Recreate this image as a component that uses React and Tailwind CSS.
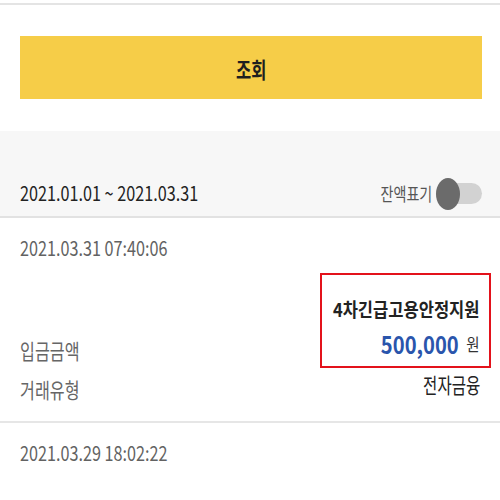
const font = { fontFamily: '"Noto Sans CJK KR", "Noto Sans", sans-serif' }

export default function App() {
  return (
    <div className="w-[500px] h-[500px] overflow-hidden bg-white" style={font}>
      {/* top edge */}
      <div className="h-[3px] bg-white" />
      <div className="h-[2px] bg-[#e4e4e4]" />

      {/* search button */}
      <div className="px-[20px] pt-[31px] pb-[32px]">
        <button className="w-[462px] h-[63px] bg-[#f6cd48] flex items-center justify-center text-[#1f1f1f]">
          <span className="inline-block text-[22px] font-bold leading-[26px] scale-x-[0.75]">조회</span>
        </button>
      </div>

      {/* period header */}
      <div className="bg-[#f7f7f7] h-[87px] flex items-end border-b-2 border-[#e2e2e2]">
        <div className="w-full flex items-center justify-between pl-[20px] pr-[18px] pb-[12px]">
          <span className="inline-block origin-left scale-x-[0.81] text-[20px] leading-[22px] text-[#222] whitespace-nowrap">
            2021.01.01 ~ 2021.03.31
          </span>
          <div className="flex items-center gap-[4px]">
            <span className="inline-block origin-right scale-x-[0.78] text-[18px] leading-[22px] text-[#555]">잔액표기</span>
            <div className="relative w-[46px] h-[21px] rounded-full bg-[#d2d2d2]">
              <div className="absolute left-0 top-[-5px] w-[24px] h-[32px] rounded-[50%] bg-[#6b6b6b]" />
            </div>
          </div>
        </div>
      </div>

      {/* transaction */}
      <div className="pl-[20px] pr-[9px] pt-[19px] pb-[21px] border-b-2 border-[#e6e6e6]">
        <div className="h-[22px]">
          <span className="inline-block origin-left scale-x-[0.81] text-[20px] leading-[22px] text-[#626262] whitespace-nowrap">
            2021.03.31 07:40:06
          </span>
        </div>
        <div className="flex justify-between items-end mt-[14px]">
          <span className="inline-block origin-left scale-x-[0.77] text-[21px] leading-[22px] text-[#666] mb-[7px]">입금금액</span>
          <div className="w-[171px] h-[95px] border-2 border-[#e3121b] flex flex-col items-end pt-[23px] pr-[9px]">
            <span className="inline-block origin-right scale-x-[0.87] text-[19px] font-bold leading-[22px] text-[#222] whitespace-nowrap">
              4차긴급고용안정지원
            </span>
            <div className="flex items-center justify-end mt-[11px] h-[26px]">
              <span className="inline-block origin-right scale-x-[0.84] text-[24px] font-bold leading-[26px] text-[#2a55ac] mr-[6px]">500,000</span>
              <span className="inline-block origin-right scale-x-[0.85] text-[17px] leading-[22px] text-[#333]">원</span>
            </div>
          </div>
        </div>
        <div className="flex justify-between items-start pr-[11px]">
          <span className="inline-block origin-left scale-x-[0.77] text-[21px] leading-[22px] text-[#666] mt-[10px]">거래유형</span>
          <span className="inline-block origin-right scale-x-[0.74] text-[21px] leading-[22px] text-[#222] mt-[5px]">전자금융</span>
        </div>
      </div>

      <div className="px-[20px] pt-[19px]">
        <span className="inline-block origin-left scale-x-[0.81] text-[20px] leading-[22px] text-[#626262] whitespace-nowrap">
          2021.03.29 18:02:22
        </span>
      </div>
    </div>
  )
}
